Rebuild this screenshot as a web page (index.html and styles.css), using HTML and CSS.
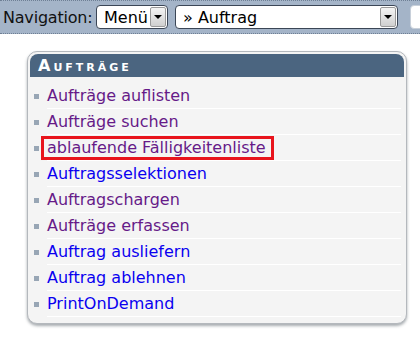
FILE: index.html
```html
<!DOCTYPE html>
<html>
<head>
<meta charset="utf-8">
<link rel="stylesheet" href="styles.css">
</head>
<body>
<div class="topbar">
  <span class="label">Navigation:</span>
  <div class="select sel-menu"><span class="val">Menü</span><span class="btn"><span class="tri"></span></span></div>
  <div class="select sel-auftrag"><span class="val">» Auftrag</span><span class="btn"><span class="tri"></span></span></div>
  <div class="select sel-extra"></div>
</div>
<div class="panel">
  <div class="head">Aufträge</div>
  <ul class="items">
    <li><a class="visited" href="#">Aufträge auflisten</a></li>
    <li><a class="visited" href="#">Aufträge suchen</a></li>
    <li><a class="visited marked" href="#">ablaufende Fälligkeitenliste</a></li>
    <li><a href="#">Auftragsselektionen</a></li>
    <li><a class="visited" href="#">Auftragschargen</a></li>
    <li><a class="visited" href="#">Aufträge erfassen</a></li>
    <li><a href="#">Auftrag ausliefern</a></li>
    <li><a href="#">Auftrag ablehnen</a></li>
    <li><a href="#">PrintOnDemand</a></li>
  </ul>
</div>
</body>
</html>
```
FILE: styles.css
```css
html, body { margin: 0; padding: 0; background: #fff; }
body { font-family: "DejaVu Sans", Verdana, sans-serif; width: 420px; height: 342px; overflow: hidden; }
.topbar {
  height: 32px;
  background: #a4b4c8;
  border-top: 1px dotted #6e7f94;
  border-bottom: 1px dotted #6e7f94;
  display: flex;
  align-items: center;
  padding-left: 3px;
  white-space: nowrap;
}
.label { font-size: 16px; color: #111; letter-spacing: -0.2px; width: 93px; flex: none; }
.select {
  flex: none;
  background: #fff;
  border: 1px solid #3b4656;
  border-radius: 4px;
  display: flex;
  align-items: center;
  justify-content: space-between;
  padding-left: 7px;
  padding-right: 1px;
  box-sizing: border-box;
  height: 24px;
}
.sel-menu { width: 72px; }
.sel-auftrag { width: 223px; margin-left: 7px; }
.sel-extra { width: 20px; border-color: #c8d0da; margin-left: 12px; }
.val { font-size: 16px; color: #000; }
.btn {
  width: 16px; height: 20px;
  background: linear-gradient(#f4f4f4, #d0d0d0);
  border: 1px solid #9a9a9a;
  border-radius: 2px;
  box-sizing: border-box;
  display: flex; align-items: center; justify-content: center;
}
.tri { width: 0; height: 0; border-left: 4px solid transparent; border-right: 4px solid transparent; border-top: 4px solid #000; }
.panel {
  margin: 17px 0 0 27px;
  width: 380px;
  height: 273px;
  box-sizing: border-box;
  background: #f4f4f4;
  border: 1px solid #b4b8bd;
  border-radius: 10px;
  box-shadow: 0 2px 3px rgba(60,70,80,0.45);
  padding: 2px 2px 0 2px;
}
.head {
  height: 23px;
  background: #4b6580;
  border-radius: 8px 8px 0 0;
  color: #fff;
  font-weight: bold;
  font-variant: small-caps;
  font-size: 16px;
  letter-spacing: 3px;
  line-height: 23px;
  padding-left: 8px;
}
.items { list-style: none; margin: 6px 0 0 0; padding: 0; }
.items li {
  display: flex; align-items: center;
  height: 26px;
  position: relative;
  padding-left: 17px;
  box-sizing: border-box;
}
.items li::before {
  content: ""; position: absolute; left: 4px; top: 11px;
  width: 5px; height: 5px; background: #98a6b5;
}
.items li::after {
  content: ""; position: absolute; left: 17px; right: 3px; bottom: 0; height: 1px; background: #fff;
}
.items a { font-size: 16px; color: #0a00f0; text-decoration: none; line-height: 18px; }
.items a.visited { color: #661a88; }
.items a.marked { border: 3px solid #e8141c; padding: 0 5px 0 3px; margin-left: -6px; }
```
